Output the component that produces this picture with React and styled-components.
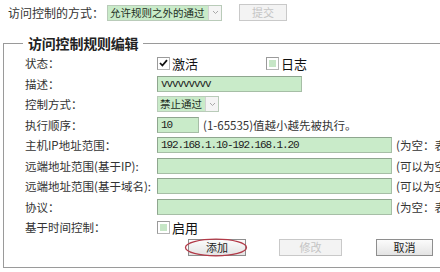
import React from 'react';
import styled, { createGlobalStyle } from 'styled-components';

const GlobalStyle = createGlobalStyle`
  html, body {
    margin: 0;
    padding: 0;
    background: #fff;
    overflow: hidden;
  }
  body {
    font-family: "Noto Sans CJK SC", "Noto Sans", sans-serif;
    font-size: 12px;
    color: #333;
  }
`;

// Layout

const Page = styled.div`
  width: 440px;
  height: 272px;
  overflow: hidden;
`;

const TopBar = styled.div`
  display: flex;
  align-items: center;
  height: 17px;
  padding: 4px 0 0 8px;
`;

const TopLabel = styled.span`
  width: 99px;
  line-height: 16px;
  white-space: nowrap;
`;

const Frame = styled.fieldset`
  margin: 13px 0 0 3px;
  padding: 1px 0 9px 21px;
  width: 470px;
  border: 1px solid #9a9a9a;
  min-inline-size: 0;
`;

const Legend = styled.legend`
  margin-left: -2px;
  padding: 0 5px;
  font-size: 14px;
  font-weight: 700;
  line-height: 18px;
  color: #222;
  letter-spacing: -0.2px;
`;

const Form = styled.div`
  display: grid;
  grid-template-columns: 132px 1fr;
  grid-auto-rows: 20.5px;
  align-items: center;
`;

const Label = styled.span`
  white-space: nowrap;
  font-size: 11.5px;
  line-height: 16px;
`;

const Field = styled.div`
  display: flex;
  align-items: center;
  gap: ${({ $gap }) => $gap ?? 4}px;
  white-space: nowrap;
`;

const Hint = styled.span`
  font-size: 11.5px;
  line-height: 16px;
  color: #333;
`;

// Controls

const Input = styled.div`
  box-sizing: border-box;
  width: ${({ $w }) => $w}px;
  height: 16px;
  padding: 0 3px;
  background: #c9ebc9;
  border: 1px solid #a6bea6;
  border-top-color: #8fa68f;
  border-left-color: #8fa68f;
  font-family: "Liberation Mono", "DejaVu Sans Mono", monospace;
  font-size: 11px;
  letter-spacing: -1.1px;
  line-height: 14px;
  color: #222;
  overflow: hidden;
`;

const Select = styled.div`
  box-sizing: border-box;
  display: flex;
  width: ${({ $w }) => $w}px;
  height: 16px;
  border: 1px solid #b9cbb9;
`;

const SelectValue = styled.span`
  flex: 1;
  background: #c9ebc9;
  padding: 0 1px 0 2px;
  line-height: 14px;
  font-size: 10.5px;
  color: #1e2e1e;
  white-space: nowrap;
  overflow: hidden;
`;

const SelectArrow = styled.span`
  width: 12px;
  display: flex;
  align-items: center;
  justify-content: center;
  background: #f4f4f4;
  border-left: 1px solid #d2d2d2;
`;

const Check = styled.span`
  box-sizing: border-box;
  width: 13px;
  height: 13px;
  display: inline-flex;
  align-items: center;
  justify-content: center;
  background: #fff;
  border: 1px solid #b5b5b5;
  border-top-color: #9a9a9a;
  border-left-color: #9a9a9a;

  &::after {
    content: '';
    display: ${({ $checked }) => ($checked ? 'none' : 'block')};
    width: 7px;
    height: 7px;
    background: #c6e6c6;
  }
`;

const CheckGroup = styled.span`
  display: inline-flex;
  align-items: center;
  gap: 2px;
  width: ${({ $w }) => ($w ? `${$w}px` : 'auto')};
  font-size: 13px;
  color: #111;
`;

const Button = styled.button`
  box-sizing: border-box;
  width: ${({ $w }) => $w}px;
  height: 17px;
  padding: 0;
  font-family: "Noto Sans CJK SC", sans-serif;
  font-size: 11px;
  line-height: 15px;
  color: ${({ disabled }) => (disabled ? '#c4c4c4' : '#222')};
  background: ${({ disabled }) =>
    disabled ? '#f3f3f3' : 'linear-gradient(#fbfbfb, #e4e4e4)'};
  border: 1px solid ${({ disabled }) => (disabled ? '#c9c9c9' : '#8e8e8e')};
  border-radius: 0;
`;

const ButtonRow = styled.div`
  grid-column: 1 / -1;
  display: flex;
  align-items: center;
  padding-left: 163px;
`;

const Marked = styled.span`
  position: relative;
  display: inline-flex;
`;

const Ring = styled.svg`
  position: absolute;
  left: -4px;
  top: -2px;
  pointer-events: none;
`;

const Arrow = () => (
  <svg width="7" height="5" viewBox="0 0 7 5">
    <path d="M1 1 L3.5 3.5 L6 1" fill="none" stroke="#a8a8a8" strokeWidth="1" />
  </svg>
);

const Tick = () => (
  <svg width="9" height="8" viewBox="0 0 9 8">
    <path d="M1 4 L3.4 6.5 L8 1.2" fill="none" stroke="#111" strokeWidth="1.8" />
  </svg>
);

const Dropdown = ({ value, w }) => (
  <Select $w={w}>
    <SelectValue>{value}</SelectValue>
    <SelectArrow>
      <Arrow />
    </SelectArrow>
  </Select>
);

const Box = ({ checked, label, w }) => (
  <CheckGroup $w={w}>
    <Check $checked={checked}>{checked && <Tick />}</Check>
    {label}
  </CheckGroup>
);

const ranges = [
  { label: '主机IP地址范围：', value: '192.168.1.10-192.168.1.20', hint: '(为空：表示所有主机)' },
  { label: '远端地址范围(基于IP):', value: '', hint: '(可以为空)' },
  { label: '远端地址范围(基于域名):', value: '', hint: '(可以为空)' },
  { label: '协议：', value: '', hint: '(为空：表示所有协议)' },
];

export default function App() {
  return (
    <Page>
      <GlobalStyle />
      <TopBar>
        <TopLabel>访问控制的方式：</TopLabel>
        <Dropdown value="允许规则之外的通过" w={115} />
        <Button $w={48} disabled style={{ marginLeft: 17 }}>提交</Button>
      </TopBar>

      <Frame>
        <Legend>访问控制规则编辑</Legend>
        <Form>
          <Label>状态：</Label>
          <Field $gap={0}>
            <Box checked label="激活" w={109} />
            <Box label="日志" />
          </Field>

          <Label>描述：</Label>
          <Field>
            <Input $w={145}>vvvvvvvvv</Input>
          </Field>

          <Label>控制方式：</Label>
          <Field>
            <Dropdown value="禁止通过" w={62} />
          </Field>

          <Label>执行顺序：</Label>
          <Field>
            <Input $w={42}>10</Input>
            <Hint>(1-65535)值越小越先被执行。</Hint>
          </Field>

          {ranges.map(({ label, value, hint }) => (
            <React.Fragment key={label}>
              <Label>{label}</Label>
              <Field>
                <Input $w={235}>{value}</Input>
                <Hint>{hint}</Hint>
              </Field>
            </React.Fragment>
          ))}

          <Label>基于时间控制：</Label>
          <Field>
            <Box label="启用" />
          </Field>

          <ButtonRow>
            <Marked>
              <Button $w={58}>添加</Button>
              <Ring width="64" height="21" viewBox="0 0 64 21">
                <ellipse cx="32" cy="10.5" rx="30.5" ry="8.3" fill="none" stroke="#b23a48" strokeWidth="1.3" />
              </Ring>
            </Marked>
            <Button $w={63} disabled style={{ marginLeft: 33 }}>修改</Button>
            <Button $w={57} style={{ marginLeft: 34 }}>取消</Button>
          </ButtonRow>
        </Form>
      </Frame>
    </Page>
  );
}
